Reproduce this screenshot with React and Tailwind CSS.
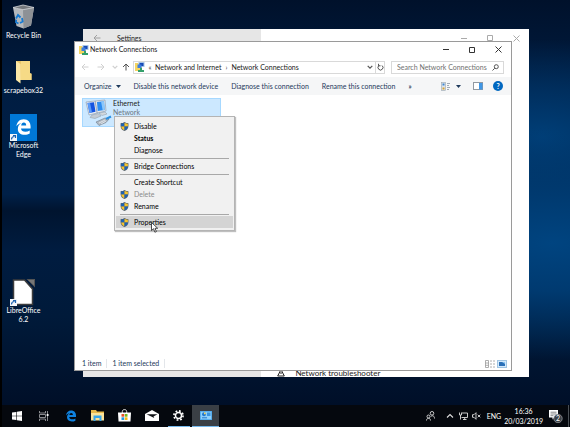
import React from "react";
import clsx from "clsx";

const desktopItems = [
  { name: "Recycle Bin", row: "row-start-1", icon: RecycleBinIcon },
  { name: "scrapebox32", row: "row-start-2", icon: FolderIcon },
  { name: "Microsoft Edge", row: "row-start-3", icon: EdgeTileIcon },
  { name: "LibreOffice 6.2", row: "row-start-6", icon: LibreOfficeIcon },
];

const menuItems = [
  { label: "Disable", shield: true },
  { label: "Status", bold: true },
  { label: "Diagnose" },
  { separator: true },
  { label: "Bridge Connections", shield: true },
  { separator: true },
  { label: "Create Shortcut" },
  { label: "Delete", shield: true, disabled: true },
  { label: "Rename", shield: true },
  { separator: true },
  { label: "Properties", shield: true, active: true },
];

const taskbarApps = [
  { name: "Start", icon: StartIcon },
  { name: "Task View", icon: TaskViewIcon },
  { name: "Microsoft Edge", icon: EdgeIcon },
  { name: "File Explorer", icon: ExplorerIcon },
  { name: "Microsoft Store", icon: StoreIcon },
  { name: "Mail", icon: MailIcon },
  { name: "Settings", icon: GearIcon, running: true },
  { name: "Network Connections", icon: PanelIcon, running: true, active: true },
];

function ShortcutArrow() {
  return (
    <g>
      <rect x="0" y="20" width="7" height="7" fill="#f2f6fa" />
      <path d="M1.5 25.5c0-2 1-3 3-3M3 21.5h2.5V24" fill="none" stroke="#1c62b0" strokeWidth="1.2" />
    </g>
  );
}

function RecycleBinIcon() {
  return (
    <svg width="27" height="27" viewBox="0 0 27 27">
      <path d="M3 3.500 13 5.500l11-2-3 18-7.500 3-7-2.500z" fill="#b4b8bc" />
      <path d="m13 5.500 11-2-3 18-7.500 3z" fill="#8d9196" />
      <path d="M3 3.500 13 1l11 2.500-11 2.200z" fill="#74787d" stroke="#d3d6d9" strokeWidth=".8" />
      <path d="M6 14.500 8 11l2.500 2.500M12 14l.7 3.500-2.700 1.500M8.500 19.500 6 18.300l.2-2.500" fill="none" stroke="#1479d2" strokeWidth="1.800" />
    </svg>
  );
}

function FolderIcon() {
  return (
    <svg width="27" height="27" viewBox="0 0 27 27">
      <path d="M6 2h14v12.500h1.500v6.500H6z" fill="#e9c568" />
      <path d="M11 2h9v12l1.500 1v6H10z" fill="#f6da86" />
      <path d="M6 2l4.500 3v19.500L6 21z" fill="#fbe8a7" />
    </svg>
  );
}

function EdgeGlyph({ fill }) {
  return (
    <path
      d="M2 11C2.600 5 6.500 1 12.300 1 18.500 1 22 5.500 22 11v3H8.500c.2 3.200 2.800 4.600 6 4.600 2.300 0 4.300-.6 6.300-1.800v4.500c-2 1.200-4.500 1.700-7.200 1.700C7.800 23 4 19.600 4 14.700c0-3.700 2-6.600 5-8.200C6 7.200 3.600 8.700 2 11zm6.700-1.200h7.100c0-2.500-1.200-4-3.300-4-2 0-3.400 1.500-3.800 4z"
      fill={fill}
    />
  );
}

function EdgeTileIcon() {
  return (
    <svg width="27" height="27" viewBox="0 0 27 27">
      <rect width="27" height="27" fill="#0078d7" />
      <svg x="5" y="4" width="17" height="18" viewBox="0 0 24 24">
        <EdgeGlyph fill="#fff" />
      </svg>
      <ShortcutArrow />
    </svg>
  );
}

function LibreOfficeIcon() {
  return (
    <svg width="27" height="27" viewBox="0 0 27 27">
      <path d="M3.500 1h11l8 9v15.500h-19z" fill="#fff" stroke="#3c3c3c" strokeWidth="1.500" />
      <path d="M16.500 0H25v8.500z" fill="#555" />
      <path d="M18 1h6v5.500z" fill="#777" />
      <ShortcutArrow />
    </svg>
  );
}

function NetworkIcon() {
  return (
    <svg width="10" height="10" viewBox="0 0 10 10" className="shrink-0">
      <path d="M0 1h3l1 1h3v7H0z" fill="#f5d560" />
      <rect x="3.500" y="0" width="6" height="5" fill="#a5c4e6" />
      <rect x="4.500" y="1" width="4" height="3" fill="#1749b5" />
      <rect x="2.500" y="2.500" width="4" height="3.500" fill="#3c7ee0" />
      <path d="M5 6h2v2h2v2H3V8h2z" fill="#34a06b" />
    </svg>
  );
}

function AdapterIcon() {
  return (
    <svg width="28" height="28" viewBox="0 0 28 28" className="shrink-0">
      <path d="m11 2 10-1 1 11-9 2z" fill="#e3e8ee" stroke="#8796a8" strokeWidth=".6" />
      <path d="m13 3 7-.7.700 8.700-7 1z" fill="#2e8cf0" />
      <path d="m17 2.500 3-.2.700 8.700-2 .3z" fill="#8cc7fb" />
      <path d="m2 3 9-1 2 12-8 2z" fill="#e9edf3" stroke="#8796a8" strokeWidth=".6" />
      <path d="m3.500 4 6.500-.8 1.500 9.600-6 1.200z" fill="#1453e0" />
      <path d="m3.500 4 2.500-.3 2 9.800-2.500.5z" fill="#5b9bf8" />
      <path d="m8 16 6-1.500 3 2.500-6 2.500-5-1z" fill="#c3cbd4" stroke="#8b96a3" strokeWidth=".5" />
      <path d="m15 14 6-1 2 2-5 1.500z" fill="#d3d9df" stroke="#8b96a3" strokeWidth=".5" />
      <path d="m12 23 9-4 4 1-3 3.500-7 3z" fill="#b0b9c3" stroke="#6d7a88" strokeWidth=".6" />
      <path d="m15 24 6-3M17 25l5-3" stroke="#e9edf1" strokeWidth=".8" />
      <path d="m22 20 5-2.500" stroke="#2c8fe0" strokeWidth="2" />
    </svg>
  );
}

function ShieldIcon() {
  return (
    <svg width="9" height="9" viewBox="0 0 16 16">
      <path d="M8 0C6 1.500 3.500 2 1 2v5c0 4.500 3 7.500 7 9 4-1.500 7-4.500 7-9V2c-2.500 0-5-.5-7-2z" fill="#56616d" />
      <path d="M8 1.500V8H2V3.200c2.200 0 4.300-.5 6-1.700z" fill="#1d62b5" />
      <path d="M8 1.500c1.700 1.200 3.800 1.700 6 1.700V8H8z" fill="#f7c42c" />
      <path d="M2 8h6v6.800C4.800 13.400 2.400 11.300 2 8z" fill="#f7c42c" />
      <path d="M8 8h6c-.4 3.300-2.800 5.400-6 6.800z" fill="#1d62b5" />
    </svg>
  );
}

function Arrow({ className }) {
  return (
    <svg width="8" height="8" viewBox="0 0 8 8" className={className}>
      <path d="M7.500 4H1M4 1 1 4l3 3" fill="none" stroke="currentColor" />
    </svg>
  );
}

function Chevron({ className }) {
  return (
    <svg width="6" height="6" viewBox="0 0 6 6" className={className}>
      <path d="m.7 1.800 2.300 2.400 2.300-2.400" fill="none" stroke="currentColor" strokeWidth="1.200" />
    </svg>
  );
}

function Triangle() {
  return (
    <svg width="5" height="3" viewBox="0 0 5 3" className="shrink-0">
      <path d="M0 0h5L2.500 3z" fill="currentColor" />
    </svg>
  );
}

function StartIcon() {
  return (
    <svg width="10" height="10" viewBox="0 0 10 10">
      <path d="M0 1.500 4.300.9v3.800H0zM4.900.8 10 0v4.700H4.900zM0 5.300h4.300v3.800L0 8.500zM4.900 5.300H10V10l-5.100-.8z" fill="#fff" />
    </svg>
  );
}

function TaskViewIcon() {
  return (
    <svg width="10" height="10" viewBox="0 0 10 10">
      <path d="M.5 0v2h6V0M.5 10V8h6v2M.5 3.500h6v3h-6zM8.500 0v10" fill="none" stroke="#a9abae" strokeWidth=".8" />
      <rect x="7.700" y="3" width="1.800" height="2" fill="#fff" />
    </svg>
  );
}

function EdgeIcon() {
  return (
    <svg width="12" height="12" viewBox="0 0 24 24">
      <EdgeGlyph fill="#0f82e0" />
    </svg>
  );
}

function ExplorerIcon() {
  return (
    <svg width="13" height="11" viewBox="0 0 13 11">
      <path d="M0 0h5l1 1.500h7V10H0z" fill="#e9b949" />
      <path d="M0 3h13v7.500H0z" fill="#fbe39a" />
      <path d="M2.500 5.500h8v5.500H8.500V8h-4v3h-2z" fill="#38a5e8" />
    </svg>
  );
}

function StoreIcon() {
  return (
    <svg width="13" height="13" viewBox="0 0 13 13">
      <path d="M4.300 4V2.500c0-2.600 4.400-2.600 4.400 0V4" fill="none" stroke="#e5e5e5" strokeWidth="1" />
      <path d="M0 3.500h13l-.5 9H.5z" fill="#fff" />
      <rect x="3.500" y="5" width="2.700" height="2.700" fill="#e8502a" />
      <rect x="6.800" y="5" width="2.700" height="2.700" fill="#78b81f" />
      <rect x="3.500" y="8.300" width="2.700" height="2.700" fill="#1d9ce5" />
      <rect x="6.800" y="8.300" width="2.700" height="2.700" fill="#f9b816" />
    </svg>
  );
}

function MailIcon() {
  return (
    <svg width="14" height="11" viewBox="0 0 14 11">
      <path d="M0 4 7 0l7 4v7H0z" fill="#fff" />
      <path d="M1.500 4.200h11L8.500 6.500l.8 1.500z" fill="#101216" />
    </svg>
  );
}

function GearIcon() {
  return (
    <svg width="11" height="11" viewBox="0 0 12 12">
      <circle cx="6" cy="6" r="5" fill="none" stroke="#fff" strokeWidth="1.800" strokeDasharray="1.960 1.960" />
      <circle cx="6" cy="6" r="3.300" fill="none" stroke="#fff" strokeWidth="1.600" />
    </svg>
  );
}

function PanelIcon() {
  return (
    <svg width="12" height="9" viewBox="0 0 12 9">
      <rect width="12" height="9" fill="#4aa5ea" />
      <rect x=".8" y=".8" width="10.400" height="7.400" fill="#8fd0fa" />
      <circle cx="4" cy="3.300" r="2" fill="#2378cc" />
      <path d="M4 3.300V1.300a2 2 0 0 1 2 2z" fill="#f4d35e" />
      <rect x="7" y="1.500" width="3.500" height="3.500" fill="#3a94e0" />
      <path d="M2 6.800h5" stroke="#2378cc" />
    </svg>
  );
}

function WindowButtons({ className }) {
  return (
    <div className={clsx("flex self-stretch", className)}>
      <button type="button" aria-label="Minimize" className="flex w-[26px] items-center justify-center">
        <svg width="6" height="7" viewBox="0 0 6 7">
          <path d="M0 3.500h6" stroke="currentColor" />
        </svg>
      </button>
      <button type="button" aria-label="Maximize" className="flex w-[26px] items-center justify-center">
        <svg width="6" height="6" viewBox="0 0 6 6">
          <path d="M.5.5h5v5h-5z" fill="none" stroke="currentColor" />
        </svg>
      </button>
      <button type="button" aria-label="Close" className="flex w-[26px] items-center justify-center">
        <svg width="7" height="7" viewBox="0 0 7 7">
          <path d="m.5.5 6 6m0-6-6 6" stroke="currentColor" />
        </svg>
      </button>
    </div>
  );
}

const SettingsWindow = () => (
  <section className="absolute top-[29px] right-[41px] bottom-[28px] left-[81px] flex bg-white">
    <div className="w-2/5 bg-[#e6e6e6]">
      <div className="flex h-[18px] items-center pl-[10px]">
        <Arrow className="text-[#a0a0a0]" />
        <h2 className="pl-4 text-[#222]">Settings</h2>
      </div>
    </div>
    <div className="flex flex-1 flex-col justify-between">
      <div className="flex h-[18px] justify-end">
        <WindowButtons className="text-[#aaa]" />
      </div>
      <div className="flex h-2 items-center gap-[10px] pl-4 text-[8px] leading-[8px] text-[#222]">
        <svg width="8" height="8" viewBox="0 0 8 8">
          <path d="M4 .5 7.300 7H.7zM4 3v2" fill="none" stroke="currentColor" />
        </svg>
        <a href="#troubleshooter">Network troubleshooter</a>
      </div>
    </div>
  </section>
);

const AddressBar = () => (
  <div className="flex h-5 items-center pr-[7px] pl-[6px]">
    <button type="button" aria-label="Back" className="flex w-4 justify-start">
      <Arrow className="text-[#d0d0d0]" />
    </button>
    <button type="button" aria-label="Forward" className="flex w-4 justify-start">
      <Arrow className="rotate-180 text-[#d0d0d0]" />
    </button>
    <button type="button" aria-label="Recent locations" className="flex w-1 justify-center">
      <Chevron className="shrink-0 text-[#d0d0d0]" />
    </button>
    <button type="button" aria-label="Up" className="flex w-4 justify-end pr-[3px]">
      <Arrow className="rotate-90 text-[#555]" />
    </button>
    <div className="flex h-[13px] flex-1 items-center border border-[#d9d9d9] pl-px">
      <NetworkIcon />
      <span className="w-[10px] text-center text-[#444]">«</span>
      <a href="#network-and-internet">Network and Internet</a>
      <span className="w-[10px] text-center text-[#444]">›</span>
      <a href="#network-connections">Network Connections</a>
      <button type="button" aria-label="Previous locations" className="ml-auto pr-[2px]">
        <Chevron className="text-[#555]" />
      </button>
      <button
        type="button"
        aria-label="Refresh"
        className="flex w-[9px] items-center justify-center self-stretch border-l border-[#d9d9d9]"
      >
        <svg width="7" height="8" viewBox="0 0 7 8">
          <path d="M2 2.500a2.500 2.500 0 1 0 3 0M1.500.8v2h2" fill="none" stroke="#555" />
        </svg>
      </button>
    </div>
    <label className="ml-[6px] flex h-[13px] w-[113px] items-center border border-[#d9d9d9] pr-1 pl-[5px]">
      <input
        type="text"
        aria-label="Search Network Connections"
        placeholder="Search Network Connections"
        className="min-w-0 flex-1 outline-none placeholder:text-[#707070]"
      />
      <svg width="7" height="7" viewBox="0 0 7 7">
        <circle cx="4.300" cy="2.700" r="2" fill="none" stroke="#555" />
        <path d="M2.800 4.200.5 6.500" stroke="#555" />
      </svg>
    </label>
  </div>
);

const CommandBar = () => (
  <div className="flex h-[18px] items-center bg-[#f5f6f7] pr-2 pl-[9px] text-[#1e395b]">
    <button type="button" className="flex items-center gap-1">
      Organize <Triangle />
    </button>
    <button type="button" className="ml-[13px]">Disable this network device</button>
    <button type="button" className="ml-[13px]">Diagnose this connection</button>
    <button type="button" className="ml-[13px]">Rename this connection</button>
    <button type="button" aria-label="More commands" className="ml-[13px] font-bold">»</button>
    <button type="button" aria-label="Change your view" className="ml-auto flex items-center gap-[6px]">
      <svg width="9" height="9" viewBox="0 0 9 9">
        <rect x=".5" y=".5" width="4" height="8" fill="#dce3ea" stroke="#9aa5b0" strokeWidth=".6" />
        <rect x="1.500" y="1.500" width="2" height="2" fill="#3f86cf" />
        <rect x="1.500" y="5.500" width="2" height="2" fill="#d9a430" />
        <path d="M6 1.500h3M6 3.500h2M6 5.500h3M6 7.500h2" stroke="#8b98a5" strokeWidth=".8" />
      </svg>
      <Triangle />
    </button>
    <button type="button" aria-label="Preview pane" className="ml-3">
      <svg width="10" height="8" viewBox="0 0 10 8">
        <rect x=".5" y=".5" width="9" height="7" fill="#fff" stroke="#9199a1" />
        <rect x="6" y="1" width="3.500" height="6.500" fill="#3f97e6" />
      </svg>
    </button>
    <button
      type="button"
      aria-label="Help"
      className="ml-[10px] flex size-[10px] items-center justify-center rounded-full bg-[#0067c0] font-bold text-white"
    >
      ?
    </button>
  </div>
);

const ContextMenu = () => (
  <ul
    role="menu"
    className="absolute top-[18px] left-8 w-[121px] border border-[#b4b4b4] bg-[#f1f1f1] px-px pt-[3px] pb-[2px] text-black shadow-[1px_1px_1px_rgba(0,0,0,0.25)]"
  >
    {menuItems.map((item, index) =>
      item.separator ? (
        <li key={index} role="separator" className="flex h-1 items-center px-1">
          <span className="h-px flex-1 bg-[#a8a8a8]" />
        </li>
      ) : (
        <li key={item.label} role="none">
          <button
            type="button"
            role="menuitem"
            disabled={item.disabled}
            className={clsx(
              "flex h-3 w-full items-center pl-1",
              item.bold && "font-bold",
              item.disabled && "text-[#8a8a8a]",
              item.active && "bg-[#d4d4d4]"
            )}
          >
            <span className="w-[14px]">{item.shield && <ShieldIcon />}</span>
            {item.label}
          </button>
        </li>
      )
    )}
  </ul>
);

const MouseCursor = () => (
  <svg width="8" height="11" viewBox="0 0 8 11" className="absolute top-[124px] left-[69px]">
    <path d="M.5.5v8l2-1.800 1.400 3.500 1.500-.6L4 6.300h2.700z" fill="#fff" stroke="#222" strokeWidth=".8" />
  </svg>
);

const NetworkWindow = () => (
  <section className="absolute top-[41px] right-[58px] bottom-[34px] left-[72px] flex flex-col border border-[#9a9a9a] bg-white text-[#1a1a1a]">
    <header className="flex h-[15px] items-center pl-1">
      <NetworkIcon />
      <h1 className="flex-1 pl-px">Network Connections</h1>
      <WindowButtons className="text-[#333]" />
    </header>
    <AddressBar />
    <CommandBar />
    <div className="flex-1 px-[7px] pt-[3px]">
      <div className="relative w-[139px]">
        <div className="flex h-[29px] gap-px border border-[#a6d8ff] bg-[#cce8ff] pl-px">
          <AdapterIcon />
          <div>
            <p>Ethernet</p>
            <p className="text-[#6d7680]">Network</p>
          </div>
        </div>
        <ContextMenu />
        <MouseCursor />
      </div>
    </div>
    <footer className="flex h-[13px] items-center pr-1 pl-[7px] text-[#1e395b]">
      <span className="border-r border-[#e3e6ea] pr-[5px]">1 item</span>
      <span className="border-r border-[#e3e6ea] pr-[5px] pl-[5px]">1 item selected</span>
      <button type="button" aria-label="Details view" className="ml-auto">
        <svg width="10" height="8" viewBox="0 0 10 8">
          <path d="M.5.5h3v7h-3zM.5 3h3M.5 5.300h3" fill="none" stroke="#999" strokeWidth=".8" />
          <path d="M5 1h2M8 1h2M5 4h2M8 4h2M5 7h2M8 7h2" stroke="#999" strokeWidth=".8" />
        </svg>
      </button>
      <button type="button" aria-label="Large icons view" className="ml-[2px]">
        <svg width="10" height="8" viewBox="0 0 10 8">
          <rect x=".5" y=".5" width="9" height="7" fill="#d3e9fb" stroke="#9fc4e2" />
          <rect x="2" y="2" width="6" height="4" fill="#2a70b8" />
          <path d="M5 2h3v2z" fill="#8bc7f2" />
        </svg>
      </button>
    </footer>
  </section>
);

const Taskbar = () => (
  <footer className="flex h-[22px] items-center bg-[#05080e] pl-px text-white">
    {taskbarApps.map(({ name, icon: Icon, running, active }) => (
      <button
        key={name}
        type="button"
        aria-label={name}
        className={clsx(
          "flex h-full w-[27px] flex-col items-center",
          active && "bg-[#3a3f45]"
        )}
      >
        <span className="flex flex-1 items-center">
          <Icon />
        </span>
        <span
          className={clsx(
            "h-px",
            active ? "w-full" : "w-[22px]",
            running && "bg-[#76b9ed]"
          )}
        />
      </button>
    ))}
    <div className="ml-auto flex h-full items-center">
      <button type="button" aria-label="People" className="pr-[11px]">
        <svg width="9" height="10" viewBox="0 0 9 10">
          <circle cx="6" cy="2.300" r="1.800" fill="none" stroke="#ddd" strokeWidth=".9" />
          <circle cx="2.500" cy="5.500" r="1.500" fill="none" stroke="#ddd" strokeWidth=".9" />
          <path d="M.5 9.500c0-3 4-3 4 0M4.800 5.500c2-1.500 3.700-.4 3.700 2" fill="none" stroke="#ddd" strokeWidth=".9" />
        </svg>
      </button>
      <button type="button" aria-label="Show hidden icons" className="pr-[5px]">
        <svg width="8" height="6" viewBox="0 0 8 6">
          <path d="m1 4.500 3-3 3 3" fill="none" stroke="#ddd" strokeWidth="1.100" />
        </svg>
      </button>
      <button type="button" aria-label="Network" className="pr-1">
        <svg width="9" height="8" viewBox="0 0 9 8">
          <path d="M3 1h5.500v4.500H2.500M4 7.500h3.500M5.700 5.500v2M.5.5v2.500h2V.5M1.500 3v4.500" fill="none" stroke="#ddd" strokeWidth=".9" />
        </svg>
      </button>
      <button type="button" aria-label="Volume muted" className="pr-[6px]">
        <svg width="9" height="8" viewBox="0 0 9 8">
          <path d="M.5 2.700h1.500L4 .7v6.600l-2-2H.5zM5.700 2.700l2.600 2.600m0-2.600L5.700 5.300" fill="none" stroke="#ddd" strokeWidth=".9" />
        </svg>
      </button>
      <button type="button" className="pr-[3px]">ENG</button>
      <button type="button" className="pr-[6px] text-center leading-[10px]">
        16:36
        <br />
        20/03/2019
      </button>
      <button type="button" aria-label="Notifications, 2 new" className="relative mr-[5px]">
        <svg width="14" height="14" viewBox="0 0 14 14">
          <path d="M0 1h9v7.500H5.500l-2 2v-2H0z" fill="#fff" />
          <path d="M1.500 3.200h6M1.500 5h6M1.500 6.700h3" stroke="#555" strokeWidth=".7" />
          <circle cx="9" cy="9.500" r="4.200" fill="#3d4248" stroke="#a0a4a8" strokeWidth=".7" />
        </svg>
        <span className="absolute right-[3px] bottom-px leading-[7px]">2</span>
      </button>
      <button type="button" aria-label="Show desktop" className="h-full w-[2px] border-l border-[#4a4f55]" />
    </div>
  </footer>
);

export default function App() {
  return (
    <div className="flex h-screen flex-col overflow-hidden border-l-2 border-black bg-[#001a3c] font-['Lato','Noto_Sans',sans-serif] text-[7px] leading-[9px]">
      <main className="relative flex-1 bg-[radial-gradient(ellipse_at_97%_60%,#004480_0%,#003a70_14%,#001f4800_34%),radial-gradient(ellipse_at_95%_34%,#003f78_0%,#00153500_26%),linear-gradient(180deg,#00112b_0%,#001d42_22%,#002048_48%,#00142f_52%,#001c40_62%,#001a3a_78%,#000f28_100%)]">
        <ul className="grid w-[43px] auto-rows-[55px]">
          {desktopItems.map(({ name, row, icon: Icon }) => (
            <li key={name} className={row}>
              <button type="button" className="flex w-full flex-col items-center pt-1 text-center text-white">
                <Icon />
                <span className="max-w-[40px]">{name}</span>
              </button>
            </li>
          ))}
        </ul>
        <SettingsWindow />
        <NetworkWindow />
      </main>
      <Taskbar />
    </div>
  );
}
